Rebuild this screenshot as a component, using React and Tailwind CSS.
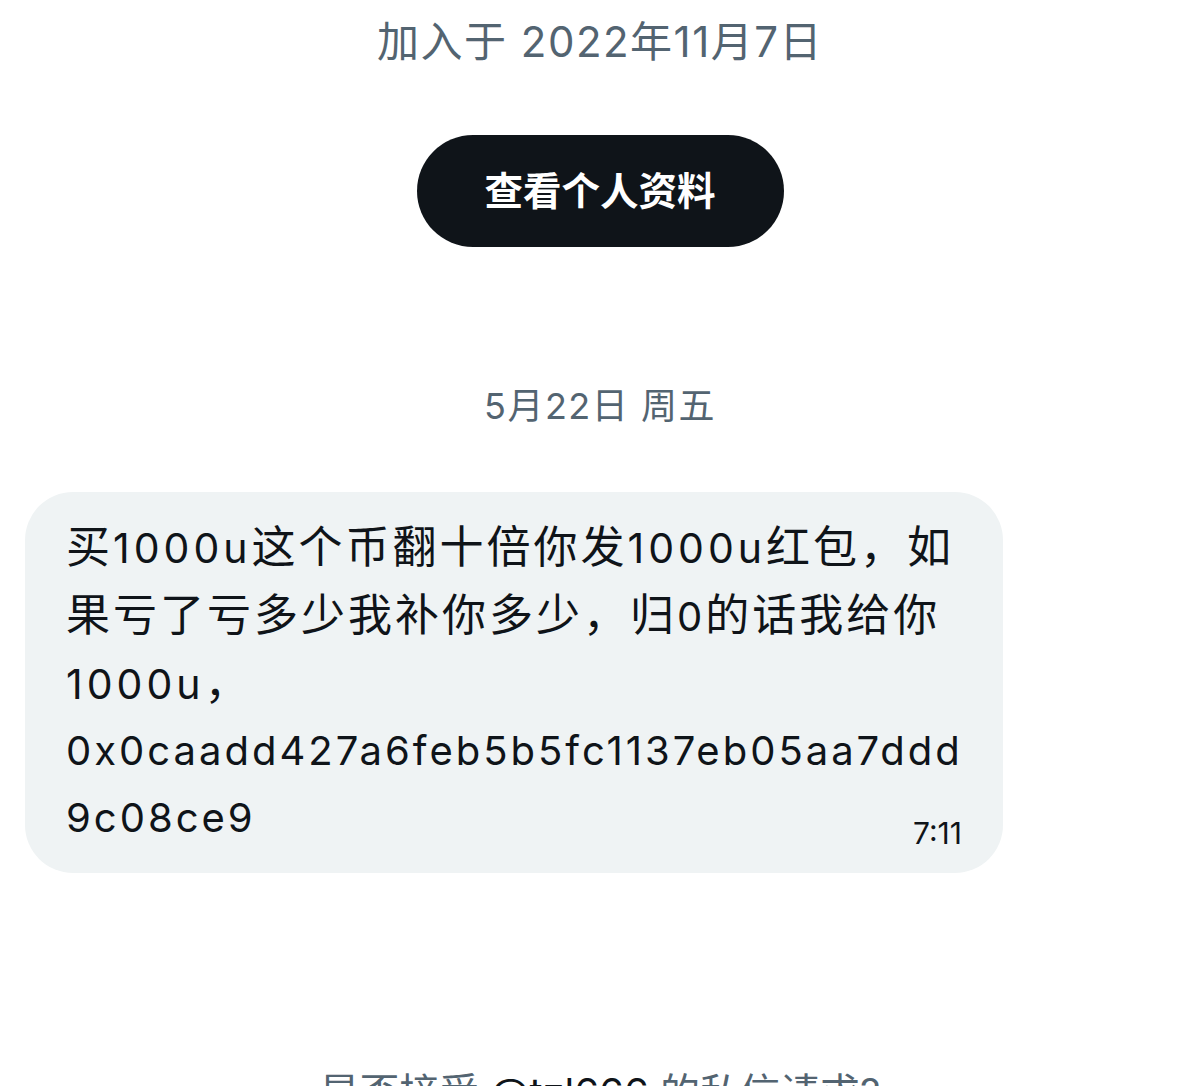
export default function App() {
  const font = { fontFamily: 'Inter, "Noto Sans CJK SC", sans-serif' };
  return (
    <div className="w-[1200px] h-[1086px] overflow-hidden bg-white flex flex-col items-center" style={font}>
      <div className="shrink-0 mt-[14px] h-[56px] leading-[56px] text-[42px] tracking-[1.5px] text-[#536471] whitespace-nowrap">
        加入于 2022年11月7日
      </div>
      <div className="shrink-0 mt-[65px] w-[367px] h-[112px] rounded-full bg-[#0f1419] flex items-center justify-center">
        <span className="text-[38.5px] font-bold text-white leading-none">查看个人资料</span>
      </div>
      <div className="shrink-0 mt-[135px] h-[48px] leading-[48px] text-[36px] tracking-[1.5px] text-[#536471] whitespace-nowrap">
        5月22日 周五
      </div>
      <div className="shrink-0 mt-[62px] self-start ml-[25px] w-[978px] rounded-[48px] bg-[#eff3f4] pl-[41px] pr-[41px] pt-[22px] pb-[21px] text-[#0f1419] text-[44px] tracking-[3px] leading-[66.7px]">
        <div className="whitespace-nowrap">买<span className="text-[41px] tracking-[4px]">1000u</span>这个币翻十倍你发<span className="text-[41px] tracking-[4px]">1000u</span>红包，如</div>
        <div className="whitespace-nowrap">果亏了亏多少我补你多少，归<span className="text-[40px]">0</span>的话我给你</div>
        <div className="whitespace-nowrap"><span className="text-[41px] tracking-[4px]">1000u</span>，</div>
        <div className="whitespace-nowrap text-[40px]">0x0caadd427a6feb5b5fc1137eb05aa7ddd</div>
        <div className="flex items-end justify-between">
          <span className="whitespace-nowrap text-[40px]">9c08ce9</span>
          <span className="text-[30px] tracking-normal leading-none mb-[4px] text-[#0f1419]">7:11</span>
        </div>
      </div>
      <div className="shrink-0 mt-[192px] h-[56px] leading-[56px] text-[40px] text-[#536471] whitespace-nowrap">
        是否接受 <span className="text-[#0f1419]">@tzl666</span> 的私信请求?
      </div>
    </div>
  );
}
